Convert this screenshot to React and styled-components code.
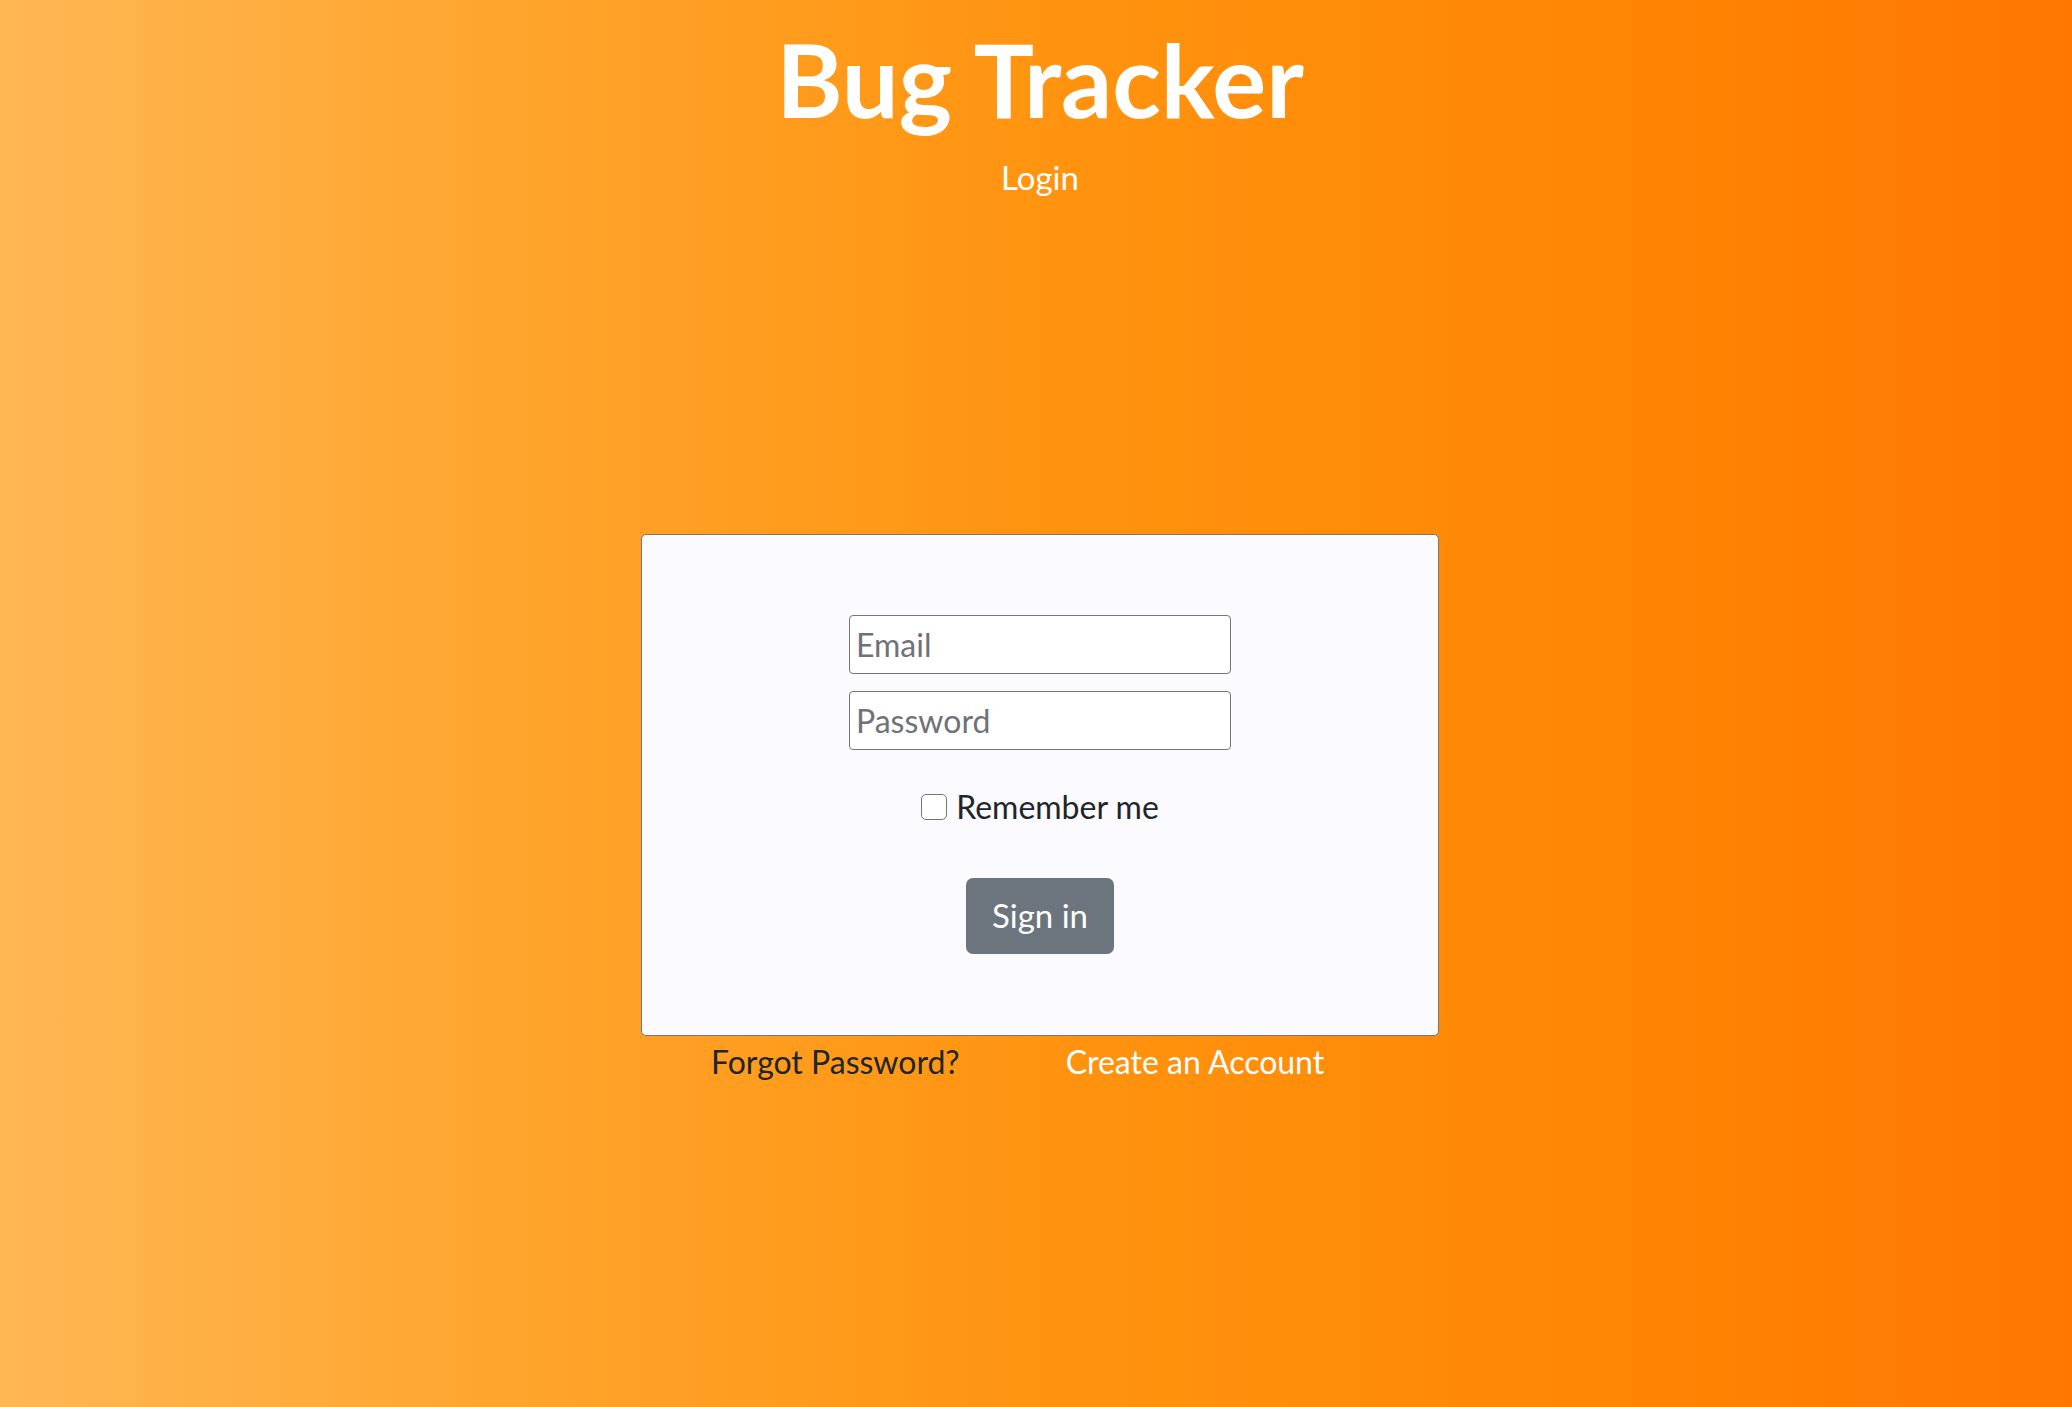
import React from "react";
import styled, { createGlobalStyle } from "styled-components";

const GlobalStyle = createGlobalStyle`
  html, body { margin: 0; padding: 0; }
  body {
    font-family: "Lato", "Open Sans", sans-serif;
    color: #212529;
  }
  * { box-sizing: border-box; }
`;

const Page = styled.div`
  min-height: 100vh;
  padding-left: 8px;
  display: flex;
  flex-direction: column;
  align-items: center;
  background: linear-gradient(90deg, #ffb754 0%, #ffa42c 25%, #ff9410 50%, #ff8705 75%, #ff7700 100%);
`;

const Title = styled.h1`
  margin: 19px 0 0;
  font-size: 101px;
  line-height: 1.2;
  font-weight: 700;
  color: #ffffff;
`;

const Subtitle = styled.div`
  margin-top: 18px;
  font-size: 33px;
  line-height: 1.2;
  color: #ffffff;
`;

const Card = styled.form`
  margin-top: 336px;
  width: 798px;
  height: 502px;
  background: #fafaff;
  border: 1px solid #777777;
  border-radius: 5px;
  display: flex;
  flex-direction: column;
  align-items: center;
  padding-top: 80px;
`;

const Input = styled.input`
  width: 382px;
  height: 59px;
  margin-bottom: ${(p) => p.$gap || 0}px;
  padding: 0 6px;
  font-family: "Lato", "Open Sans", sans-serif;
  font-size: 32px;
  color: #212529;
  background: #ffffff;
  border: 1px solid #767676;
  border-radius: 4px;
  outline: none;
  &::placeholder { color: #6f7276; }
`;

const CheckRow = styled.label`
  margin-top: 39px;
  display: flex;
  align-items: center;
  gap: 9px;
  font-size: 32px;
  line-height: 1.125;
  color: #212529;
`;

const Box = styled.span`
  width: 26px;
  height: 26px;
  border: 1.5px solid #767676;
  border-radius: 5px;
  background: #ffffff;
`;

const Button = styled.button`
  margin-top: 53px;
  height: 76px;
  padding: 0 26px;
  font-family: "Lato", "Open Sans", sans-serif;
  font-size: 33px;
  line-height: 1.2;
  color: #ffffff;
  background: #6c757d;
  border: none;
  border-radius: 7px;
`;

const Links = styled.div`
  width: 798px;
  margin-top: 7px;
  display: flex;
  padding-left: 70px;
  gap: 106px;
  font-size: 32px;
  line-height: 1.2;
`;

const LinkText = styled.a`
  color: ${(p) => (p.$light ? "#ffffff" : "#212529")};
  text-decoration: none;
`;

export default function App() {
  return (
    <>
      <GlobalStyle />
      <Page>
        <Title>Bug Tracker</Title>
        <Subtitle>Login</Subtitle>
        <Card onSubmit={(e) => e.preventDefault()}>
          <Input type="email" placeholder="Email" $gap={17} />
          <Input type="password" placeholder="Password" />
          <CheckRow>
            <Box />
            Remember me
          </CheckRow>
          <Button type="submit">Sign in</Button>
        </Card>
        <Links>
          <LinkText href="#">Forgot Password?</LinkText>
          <LinkText href="#" $light>Create an Account</LinkText>
        </Links>
      </Page>
    </>
  );
}
